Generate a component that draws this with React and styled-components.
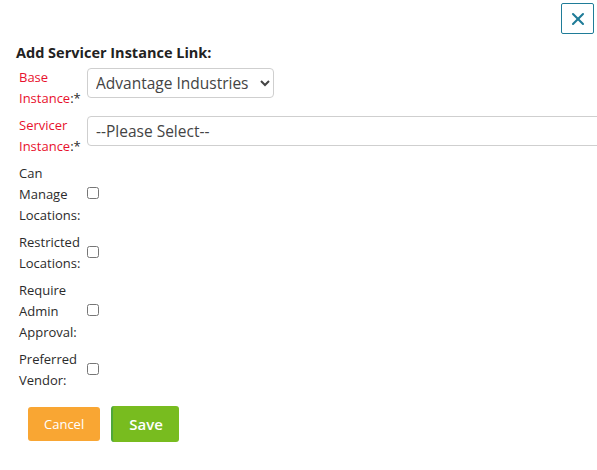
import React from "react";
import styled, { createGlobalStyle } from "styled-components";
import { X } from "lucide-react";

const GlobalStyle = createGlobalStyle`
  body {
    margin: 0;
    background: #fff;
    font-family: "Open Sans", "Noto Sans", Arial, sans-serif;
    overflow: hidden;
  }
`;

const Page = styled.div`
  position: relative;
  width: 597px;
  height: 470px;
  overflow: hidden;
`;

const CloseButton = styled.button`
  position: absolute;
  top: 3px;
  left: 561px;
  width: 33px;
  height: 31px;
  padding: 0;
  border: 1px solid #1f7c98;
  border-radius: 2px;
  background: #fff;
  color: #1f7c98;
  display: flex;
  align-items: center;
  justify-content: center;
`;

const Form = styled.div`
  padding: 43px 0 0 16px;
`;

const Heading = styled.h3`
  margin: 0 0 4px;
  font-size: 14.5px;
  line-height: 20px;
  font-weight: 700;
  color: #222;
`;

const Fields = styled.div`
  display: grid;
  grid-template-columns: 68px 1fr;
  column-gap: 3px;
  row-gap: 6px;
`;

const Label = styled.div`
  padding-left: 3px;
  font-size: 13px;
  line-height: 21px;
  color: ${(p) => (p.required ? "#e8112d" : "#2b2b2b")};
`;

const Star = styled.span`
  color: #2b2b2b;
`;

const Control = styled.div`
  display: flex;
  align-items: ${(p) => (p.center ? "center" : "flex-start")};
  padding-top: ${(p) => (p.center ? "0" : "1px")};
`;

const Select = styled.select`
  height: 30px;
  width: ${(p) => p.width};
  flex-shrink: 0;
  padding: 0 4px;
  border: 1px solid #cfcfcf;
  border-radius: 4px;
  background: #fff;
  font-family: inherit;
  font-size: 15.5px;
  color: #444;
`;

const Checkbox = styled.input`
  width: 12px;
  height: 12px;
  margin: 0 0 3px 0;
`;

const Actions = styled.div`
  display: flex;
  align-items: center;
  gap: 11px;
  padding: 15px 0 0 12px;
`;

const Button = styled.button`
  height: ${(p) => (p.primary ? "36px" : "34px")};
  padding: 0 ${(p) => (p.primary ? "16px" : "16px")};
  border: none;
  border-left: ${(p) => (p.primary ? "2px solid #4fa63a" : "none")};
  border-radius: 3px;
  background: ${(p) => (p.primary ? "#78bc1f" : "#f9a633")};
  color: #fff;
  font-family: inherit;
  font-size: ${(p) => (p.primary ? "15px" : "13px")};
  font-weight: ${(p) => (p.primary ? 600 : 400)};
`;

const fields = [
  { label: ["Base", "Instance:"], required: true, kind: "base" },
  { label: ["Servicer", "Instance:"], required: true, kind: "servicer" },
  { label: ["Can", "Manage", "Locations:"] },
  { label: ["Restricted", "Locations:"] },
  { label: ["Require", "Admin", "Approval:"] },
  { label: ["Preferred", "Vendor:"] },
];

const renderLabel = (f) =>
  f.label.map((line, i) => {
    const last = i === f.label.length - 1;
    if (last && f.required) {
      return (
        <React.Fragment key={i}>
          {line.replace(":", "")}
          <Star>:*</Star>
        </React.Fragment>
      );
    }
    return (
      <React.Fragment key={i}>
        {line}
        {!last && <br />}
      </React.Fragment>
    );
  });

export default function App() {
  return (
    <Page>
      <GlobalStyle />
      <CloseButton aria-label="Close">
        <X size={20} strokeWidth={2.5} />
      </CloseButton>
      <Form>
        <Heading>Add Servicer Instance Link:</Heading>
        <Fields>
          {fields.map((f, i) => (
            <React.Fragment key={i}>
              <Label required={f.required}>{renderLabel(f)}</Label>
              {f.kind === "base" && (
                <Control>
                  <Select width="187px" defaultValue="adv">
                    <option value="adv">Advantage Industries</option>
                  </Select>
                </Control>
              )}
              {f.kind === "servicer" && (
                <Control>
                  <Select width="540px" defaultValue="">
                    <option value="">--Please Select--</option>
                  </Select>
                </Control>
              )}
              {!f.kind && (
                <Control center>
                  <Checkbox type="checkbox" />
                </Control>
              )}
            </React.Fragment>
          ))}
        </Fields>
        <Actions>
          <Button>Cancel</Button>
          <Button primary>Save</Button>
        </Actions>
      </Form>
    </Page>
  );
}
